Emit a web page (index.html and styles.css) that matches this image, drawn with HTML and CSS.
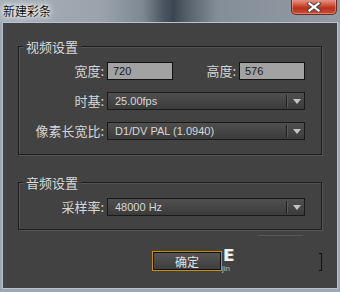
FILE: index.html
```html
<!DOCTYPE html>
<html lang="zh-CN">
<head>
  <meta charset="UTF-8">
  <title>新建彩条</title>
  <link rel="stylesheet" href="styles.css">
</head>
<body>
  <div class="window">
    <header class="titlebar">
      <span class="title">新建彩条</span>
      <button class="close" aria-label="关闭">
        <svg width="16" height="10" viewBox="0 0 16 10">
          <path d="M3.5 1.5 L12.5 8.5 M12.5 1.5 L3.5 8.5" stroke="#4a4a52" stroke-width="4.2" stroke-linecap="square"/>
          <path d="M3.5 1.5 L12.5 8.5 M12.5 1.5 L3.5 8.5" stroke="#fff" stroke-width="2.2" stroke-linecap="square"/>
        </svg>
      </button>
    </header>

    <main class="panel">
      <section class="group video">
        <div class="legend">视频设置</div>
        <div class="rows">
          <div class="row">
            <label class="lbl">宽度:</label>
            <div class="field">720</div>
            <label class="lbl lbl-2">高度:</label>
            <div class="field">576</div>
          </div>
          <div class="row">
            <label class="lbl">时基:</label>
            <div class="select"><span>25.00fps</span><i class="arrow"></i></div>
          </div>
          <div class="row">
            <label class="lbl">像素长宽比:</label>
            <div class="select"><span>D1/DV PAL (1.0940)</span><i class="arrow"></i></div>
          </div>
        </div>
      </section>

      <section class="group audio">
        <div class="legend">音频设置</div>
        <div class="rows">
          <div class="row">
            <label class="lbl">采样率:</label>
            <div class="select"><span>48000 Hz</span><i class="arrow"></i></div>
          </div>
        </div>
      </section>

      <div class="ghost-line"></div>

      <div class="actions">
        <button class="ok">确定</button>
        <div class="mark"><b>E</b><small>jin</small></div>
        <span class="edge"></span>
      </div>
    </main>
  </div>
</body>
</html>
```

FILE: styles.css
```css
:root {
  --panel: #424242;
  --text: #d6d6d6;
  --line-dark: #1e1e1e;
}

* { box-sizing: border-box; }

body {
  margin: 0;
  font-family: "Liberation Sans", "Noto Sans CJK SC", sans-serif;
  font-size: 11px;
}

.window {
  width: 340px;
  height: 292px;
  background: #9ba7b2;
  display: flex;
  flex-direction: column;
}

/* barre de titre */
.titlebar {
  height: 22px;
  flex: none;
  display: flex;
  align-items: flex-start;
  justify-content: space-between;
  background: linear-gradient(to right,
    #a7b0b8 0%, #9aa3ac 30%, #7d8893 42%, #4b5662 48%,
    #3b4652 51%, #55606b 55%, #848e98 64%, #939ca5 100%);
}

.title {
  margin: 4px 0 0 3px;
  font-family: "Noto Sans CJK SC", sans-serif;
  font-size: 12px;
  line-height: 14px;
  color: #111;
  text-shadow: 0 0 6px #fff, 0 0 3px #fff, 0 0 8px #e8eef2;
}

.close {
  width: 46px;
  height: 16px;
  margin: -1px 3px 0 0;
  padding: 0;
  border: 1px solid #6b2a24;
  border-top: none;
  border-radius: 0 0 5px 5px;
  background: linear-gradient(to bottom, #e8a090 0%, #d4604a 35%, #b8301c 60%, #c8503a 100%);
  box-shadow: inset 0 0 0 1px rgba(255, 200, 190, 0.4);
  display: flex;
  align-items: center;
  justify-content: center;
}

/* panneau principal */
.panel {
  flex: 1;
  margin: 0 2px 3px;
  border: 1px solid #b9c3cc;
  background: var(--panel);
  padding: 23px 15px 0;
  color: var(--text);
}

.group {
  border: 1px solid var(--line-dark);
  box-shadow: inset 1px 1px 0 #555, 1px 1px 0 #555;
}

.group.video { padding: 0 14px 14px 0; }
.group.audio { padding: 0 14px 13px 0; margin-top: 27px; }

.legend {
  width: max-content;
  height: 15px;
  margin: -8px 0 0 4px;
  padding: 0 3px;
  background: var(--panel);
  font-family: "Noto Sans CJK SC", sans-serif;
  font-size: 13px;
  line-height: 15px;
  color: #dadada;
}

.rows {
  margin-top: 8px;
  display: flex;
  flex-direction: column;
  gap: 12px;
}

.row {
  display: flex;
  align-items: center;
  height: 18px;
}

.lbl {
  width: 85px;
  margin-right: 3px;
  text-align: right;
  font-family: "Noto Sans CJK SC", sans-serif;
  font-size: 13px;
  line-height: 18px;
}

.lbl-2 {
  width: 63px;
  margin-right: 3px;
}

.field {
  width: 66px;
  height: 18px;
  border: 1px solid #111;
  background: #a2a2a2;
  color: #1a1a1a;
  padding-left: 5px;
  line-height: 16px;
}

.select {
  width: 198px;
  height: 18px;
  border: 1px solid #1a1a1a;
  background: linear-gradient(to bottom, #4f4f4f, #3b3b3b);
  display: flex;
  align-items: center;
  line-height: 16px;
  color: #d8d8d8;
}

.select span {
  flex: 1;
  padding-left: 7px;
}

.arrow {
  width: 18px;
  height: 12px;
  border-left: 1px solid #1c1c1c;
  box-shadow: inset 1px 0 0 #5c5c5c;
  display: flex;
  align-items: center;
  justify-content: center;
}

.arrow::after {
  content: "";
  border-left: 4px solid transparent;
  border-right: 4px solid transparent;
  border-top: 5px solid #c4c4c4;
  margin-left: 2px;
}

.ghost-line {
  width: 45px;
  height: 1px;
  margin: 5px 0 0 240px;
  background: #575757;
}

.actions {
  margin-top: 15px;
  padding-left: 134px;
  display: flex;
  align-items: flex-start;
}

.ok {
  width: 70px;
  height: 20px;
  padding: 0;
  border: 1px solid #c98f0c;
  box-shadow: inset 0 0 0 1px #111;
  background: linear-gradient(to bottom, #565656, #3c3c3c);
  color: #e2e2e2;
  font-family: "Noto Sans CJK SC", sans-serif;
  font-size: 12px;
  line-height: 17px;
}

.mark {
  width: 18px;
  margin-top: -4px;
  display: flex;
  flex-direction: column;
  color: #f2f2f2;
}

.mark b {
  font-family: "DejaVu Sans", sans-serif;
  font-size: 16px;
  line-height: 17px;
  padding-left: 1px;
  text-shadow: 1px 0 0 #aaa;
}

.mark small {
  font-size: 8px;
  line-height: 9px;
  color: #bbb;
}

.edge {
  width: 3px;
  height: 18px;
  margin: 2px 0 0 auto;
  border: 1px solid #111;
  border-left: none;
}
```
